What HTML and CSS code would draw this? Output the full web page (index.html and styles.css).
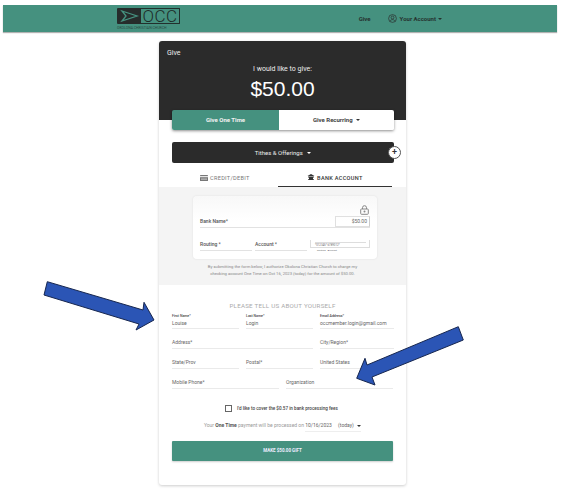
FILE: index.html
```html
<!DOCTYPE html>
<html lang="en">
<head>
    <meta charset="UTF-8">
    <title>Give</title>
    <link rel="stylesheet" href="styles.css">
</head>
<body>
    <header class="topbar">
        <div class="logo">
            <div class="logo-mark">
                <svg width="24" height="16" viewBox="0 0 24 16"><path d="M5 3 L20 8 L5 13 L9 8 Z" fill="none" stroke="#45917f" stroke-width="1.3"/></svg>
            </div>
            <div class="logo-occ">OCC</div>
            <div class="logo-name">OKOLONA CHRISTIAN CHURCH</div>
        </div>
        <nav class="topnav">
            <span class="nav-give">Give</span>
            <svg class="nav-user" width="9" height="9" viewBox="0 0 12 12"><circle cx="6" cy="6" r="5.2" fill="none" stroke="#2b2b2b" stroke-width=".9"/><circle cx="6" cy="4.7" r="1.9" fill="none" stroke="#2b2b2b" stroke-width=".9"/><path d="M2.6 9.6c.8-1.5 2-2.1 3.4-2.1s2.600.6 3.400 2.100" fill="none" stroke="#2b2b2b" stroke-width=".9"/></svg>
            <span class="nav-account">Your Account</span>
            <span class="caret"></span>
        </nav>
    </header>

    <main class="card">
        <section class="hero">
            <div class="hero-title">Give</div>
            <div class="hero-like">I would like to give:</div>
            <div class="hero-amount">$50.00</div>
        </section>

        <div class="freq">
            <div class="freq-one">Give One Time</div>
            <div class="freq-rec">Give Recurring <span class="caret dark"></span></div>
        </div>

        <div class="fund">
            Tithes &amp; Offerings <span class="caret light"></span>
            <span class="fund-add">+</span>
        </div>

        <div class="tabs">
            <div class="tab tab-card">
                <svg width="8" height="6" viewBox="0 0 8 6"><rect width="8" height="6" rx=".6" fill="#777"/><rect y="1.200" width="8" height="1" fill="#fff"/><rect x="1" y="3.600" width="6" height="1" fill="#ccc"/></svg>
                CREDIT/DEBIT
            </div>
            <div class="tab tab-on">
                <svg width="8" height="7" viewBox="0 0 8 7"><path d="M4 0 L7.500 2 H.5 Z M1 2.600 H7 V3.400 H6 V5.200 H7 V6 H1 V5.200 H2 V3.400 H1 Z" fill="#333"/></svg>
                BANK ACCOUNT
            </div>
        </div>

        <section class="bank">
            <div class="check">
                <div class="check-lock">
                    <svg width="9" height="10" viewBox="0 0 9 10"><path d="M2.500 4V2.700a2 2 0 0 1 4 0V4" fill="none" stroke="#888"/><rect x=".7" y="4" width="7.600" height="5.300" rx=".8" fill="none" stroke="#888"/><circle cx="4.500" cy="6.600" r="1" fill="#888"/></svg>
                </div>
                <div class="check-row check-top">
                    <div class="check-bank">Bank Name*</div>
                    <div class="check-amount">$50.00</div>
                </div>
                <div class="check-row check-low">
                    <div class="check-num">Routing *</div>
                    <div class="check-num">Account *</div>
                    <div class="check-sample">
                        <div class="sample-box">
                            <div class="sample-line"></div>
                            *012345* 6789012*
                        </div>
                        <div class="sample-labels"><span>Routing</span><span>Account</span></div>
                    </div>
                </div>
            </div>
            <p class="bank-note">By submitting the form below, I authorize Okolona Christian Church to charge my<br>checking account One Time on Oct 16, 2023 (today) for the amount of $50.00.</p>
        </section>

        <section class="about">
            <h2 class="about-title">PLEASE TELL US ABOUT YOURSELF</h2>
            <div class="form-row thirds">
                <div class="field filled"><label>First Name*</label><span>Louise</span></div>
                <div class="field filled"><label>Last Name*</label><span>Login</span></div>
                <div class="field filled"><label>Email Address*</label><span>occmember.login@gmail.com</span></div>
            </div>
            <div class="form-row address">
                <div class="field"><span>Address*</span></div>
                <div class="field"><span>City/Region*</span></div>
            </div>
            <div class="form-row thirds">
                <div class="field"><span>State/Prov</span></div>
                <div class="field"><span>Postal*</span></div>
                <div class="field"><span>United States</span></div>
            </div>
            <div class="form-row halves">
                <div class="field"><span>Mobile Phone*</span></div>
                <div class="field"><span>Organization</span></div>
            </div>
            <div class="cover"><span class="checkbox"></span>I'd like to cover the $0.57 in bank processing fees</div>
            <div class="when">Your <b>One Time</b> payment will be processed on <span class="when-date">10/16/2023 <i>(today)</i> <span class="caret dark"></span></span></div>
            <div class="submit">MAKE $50.00 GIFT</div>
        </section>
    </main>

    <svg class="arrows" width="566" height="492" viewBox="0 0 566 492">
        <path d="M47.300 281.700 L44 295 L139 324 L136 330 L154 320 L144 302.300 L143 310 Z" fill="#2b55b5" stroke="#16264f" stroke-width="1"/>
        <path d="M458.300 326.700 L463.300 340 L372 377 L375 385 L356.700 378.300 L365 358.300 L367 365 Z" fill="#2b55b5" stroke="#16264f" stroke-width="1"/>
    </svg>
</body>
</html>
```

FILE: styles.css
```css
* { box-sizing: border-box; }
html, body { margin: 0; padding: 0; }
body { position: relative; width: 566px; height: 492px; overflow: hidden; background: #fff; font-family: Roboto, "Liberation Sans", sans-serif; color: #333; padding-top: 5px; }

.topbar { display: flex; justify-content: space-between; align-items: center; height: 27px; margin: 0 9px 0 3px; padding: 0 115px 0 114px; background: #45917f; box-shadow: 0 1px 1px rgba(0, 0, 0, 0.3); }
.logo { display: grid; grid-template-columns: 24px 39px; grid-template-rows: 16px 6px; }
.logo-mark { background: #262c2b; border-radius: 1px 0 0 1px; overflow: hidden; }
.logo-mark svg { display: block; }
.logo-occ { font-size: 17px; font-weight: 300; letter-spacing: 0.4px; line-height: 14px; color: #1d2a27; text-align: center; border: 1px solid #22302d; border-left: 0; border-radius: 0 1px 1px 0; }
.logo-name { grid-column: 1 / 3; margin-top: 2px; font-size: 3.500px; line-height: 4px; color: #2a4a43; white-space: nowrap; }
.topnav { display: flex; align-items: center; font-size: 6px; font-weight: 700; color: #25322f; }
.nav-give { margin-right: 17px; }
.nav-user { margin-right: 3px; }
.nav-account { margin-right: 2px; }
.caret { display: inline-block; width: 0; height: 0; border-left: 2px solid transparent; border-right: 2px solid transparent; border-top: 2px solid #25322f; vertical-align: middle; }
.caret.light { border-top-color: #fff; margin-left: 3px; }
.caret.dark { border-top-color: #333; margin-left: 2px; }

.card { width: 247px; height: 444px; margin: 9px 0 0 159px; background: #fff; border-radius: 3px; box-shadow: 0 1px 3px rgba(0, 0, 0, 0.2); }
.hero { height: 79px; padding: 8px 8px 0; background: #2b2b2b; color: #fff; border-radius: 3px 3px 0 0; text-align: center; }
.hero-title { text-align: left; font-size: 7px; line-height: 8px; color: #eee; }
.hero-like { margin-top: 7px; font-size: 7px; line-height: 10px; color: #eee; }
.hero-amount { margin-top: 2px; font-family: "Liberation Sans", sans-serif; font-size: 21px; line-height: 26px; }

.freq { display: flex; width: 222px; height: 20px; margin: -10px 0 0 13px; position: relative; font-size: 6px; font-weight: 700; line-height: 20px; text-align: center; border-radius: 2px; box-shadow: 0 1px 3px rgba(0, 0, 0, 0.45); }
.freq-one { width: 107px; background: #45917f; color: #f2f2f2; border-radius: 2px 0 0 2px; }
.freq-rec { flex: 1; background: #fff; color: #444; border-radius: 0 2px 2px 0; }

.fund { display: block; position: relative; width: 222px; height: 21px; margin: 12px 0 0 13px; background: #2b2b2b; border-radius: 2px; color: #eee; font-size: 6px; line-height: 22px; text-align: center; }
.fund-add { position: absolute; right: -7px; top: 4px; width: 13px; height: 13px; border-radius: 50%; background: #fff; border: 1px solid #555; color: #333; font-size: 9px; font-weight: 500; line-height: 10px; }

.tabs { display: flex; height: 24px; padding: 0 14px 0 13px; font-size: 5.600px; letter-spacing: 0.3px; line-height: 16px; text-align: center; color: #777; }
.tab { height: 24px; padding-top: 7px; }
.tab svg { vertical-align: -1px; }
.tab-card { width: 106px; }
.tab-on { flex: 1; color: #333; font-weight: 500; border-bottom: 1px solid #333; }

.bank { height: 98px; padding-top: 9px; background: #f4f4f4; }
.check { width: 184px; height: 63px; margin-left: 34px; padding: 4px 7px 0; background: linear-gradient(#f8f8f8, #fff 40%); border-radius: 4px; box-shadow: 0 0 2px rgba(0, 0, 0, 0.1); }
.check-lock { height: 16px; padding-right: 1px; text-align: right; }
.check-row { display: flex; font-size: 5px; color: #555; font-weight: 500; }
.check-top { height: 12px; border-bottom: 1px solid #e2e2e2; }
.check-bank { flex: 1; line-height: 10px; }
.check-amount { width: 35px; height: 11px; border: 1px solid #e0e0e0; border-right-color: #ccc; font-weight: 400; line-height: 9px; text-align: right; padding-right: 2px; color: #666; }
.check-low { margin-top: 12px; gap: 3px; }
.check-num { width: 52px; height: 11px; line-height: 8px; border-bottom: 1px solid #e2e2e2; }
.check-sample { width: 60px; }
.sample-box { height: 8px; padding: 1px 0 0 4px; border: 1px solid #ddd; border-top: 0; font-size: 2.800px; line-height: 4px; color: #666; font-weight: 400; white-space: nowrap; overflow: hidden; }
.sample-line { height: 1px; margin: 1px 3px 0 0; background: #ddd; }
.sample-labels { display: flex; gap: 2px; padding-left: 7px; font-size: 2.500px; line-height: 6px; color: #666; font-weight: 400; }
.bank-note { margin: 5px 0 0; font-size: 4.200px; line-height: 6.500px; text-align: center; color: #888; }

.about { padding: 17px 13px 0; }
.about-title { margin: 0 0 2px; font-size: 6.200px; font-weight: 400; line-height: 8px; text-align: center; color: #aaa; letter-spacing: 0.25px; }
.form-row { display: grid; column-gap: 7px; margin-bottom: 1px; }
.thirds { grid-template-columns: 67px 67px 74px; }
.address { grid-template-columns: 141px 74px; }
.halves { grid-template-columns: 107px 107px; }
.field { display: flex; flex-direction: column; justify-content: flex-end; height: 19px; padding-bottom: 2px; border-bottom: 1px solid #eaeaea; font-size: 5px; color: #666; }
.field.filled { height: 17px; padding-bottom: 1px; }
.field label { margin-bottom: 1px; font-size: 3.500px; line-height: 5px; font-weight: 500; color: #444; }
.field span { line-height: 7px; }

.cover { margin-top: 16px; padding-left: 53px; font-size: 4.600px; line-height: 7px; font-weight: 500; color: #444; }
.checkbox { display: inline-block; width: 7px; height: 7px; margin-right: 5px; border: 1px solid #666; vertical-align: -2px; }
.when { margin-top: 10px; font-size: 5px; line-height: 7px; text-align: center; color: #999; }
.when b { color: #555; }
.when-date { display: inline-block; padding-bottom: 2px; border-bottom: 1px solid #eee; color: #666; }
.when-date i { font-style: normal; margin-left: 5px; }
.submit { height: 20px; margin-top: 9px; background: #45917f; color: #eef; font-size: 4.500px; font-weight: 700; line-height: 19px; text-align: center; border-radius: 1px; box-shadow: 0 1px 2px rgba(0, 0, 0, 0.2); }

.arrows { position: absolute; left: 0; top: 0; pointer-events: none; }
```
